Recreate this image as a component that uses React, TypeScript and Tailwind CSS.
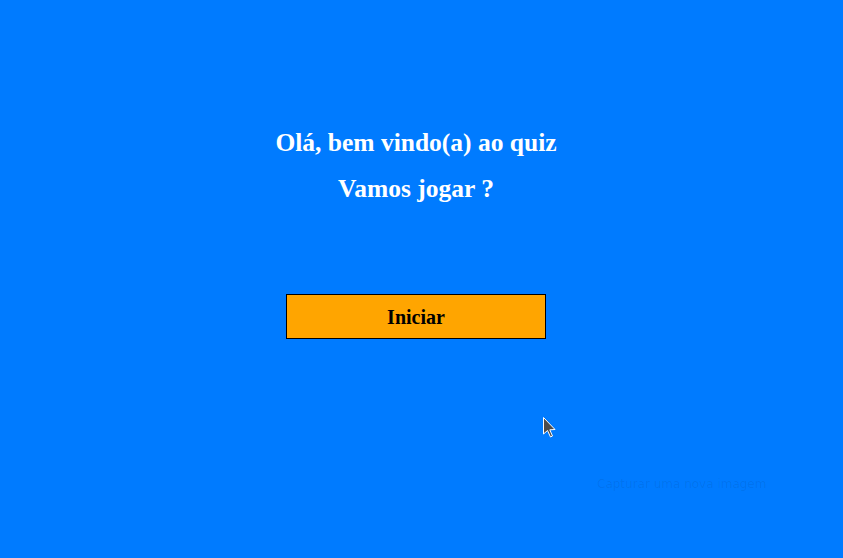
export default function App() {
  return (
    <div className="relative h-[558px] w-full overflow-hidden bg-[#007bff] font-['Liberation_Serif',serif]">
      <div className="flex w-[832px] flex-col items-center pt-[129px]">
        <h2 className="text-[25.5px] font-bold leading-[28px] text-white">
          Olá, bem vindo(a) ao quiz
        </h2>
        <h2 className="mt-[18px] text-[25.5px] font-bold leading-[28px] text-white">
          Vamos jogar ?
        </h2>
        <button className="mt-[91px] h-[45px] w-[260px] border border-black bg-[#ffa500] text-[20px] font-bold text-black">
          Iniciar
        </button>
      </div>

      <svg
        className="absolute left-[542px] top-[416px]"
        width="16"
        height="24"
        viewBox="0 0 16 24"
      >
        <path
          d="M1.5 1.5 L1.5 18 L5.5 14.5 L8.5 21 L10.5 20 L7.8 13.8 L13 13.5 Z"
          fill="#4d4d4d"
          stroke="#fff"
          strokeWidth="1"
          strokeLinejoin="round"
        />
      </svg>

      <div className="absolute left-[590px] top-[472px] px-[7px] py-[4px] font-['DejaVu_Sans',sans-serif] text-[12px] leading-[16px] text-black/[0.08]">
        Capturar uma nova imagem
      </div>
    </div>
  );
}
